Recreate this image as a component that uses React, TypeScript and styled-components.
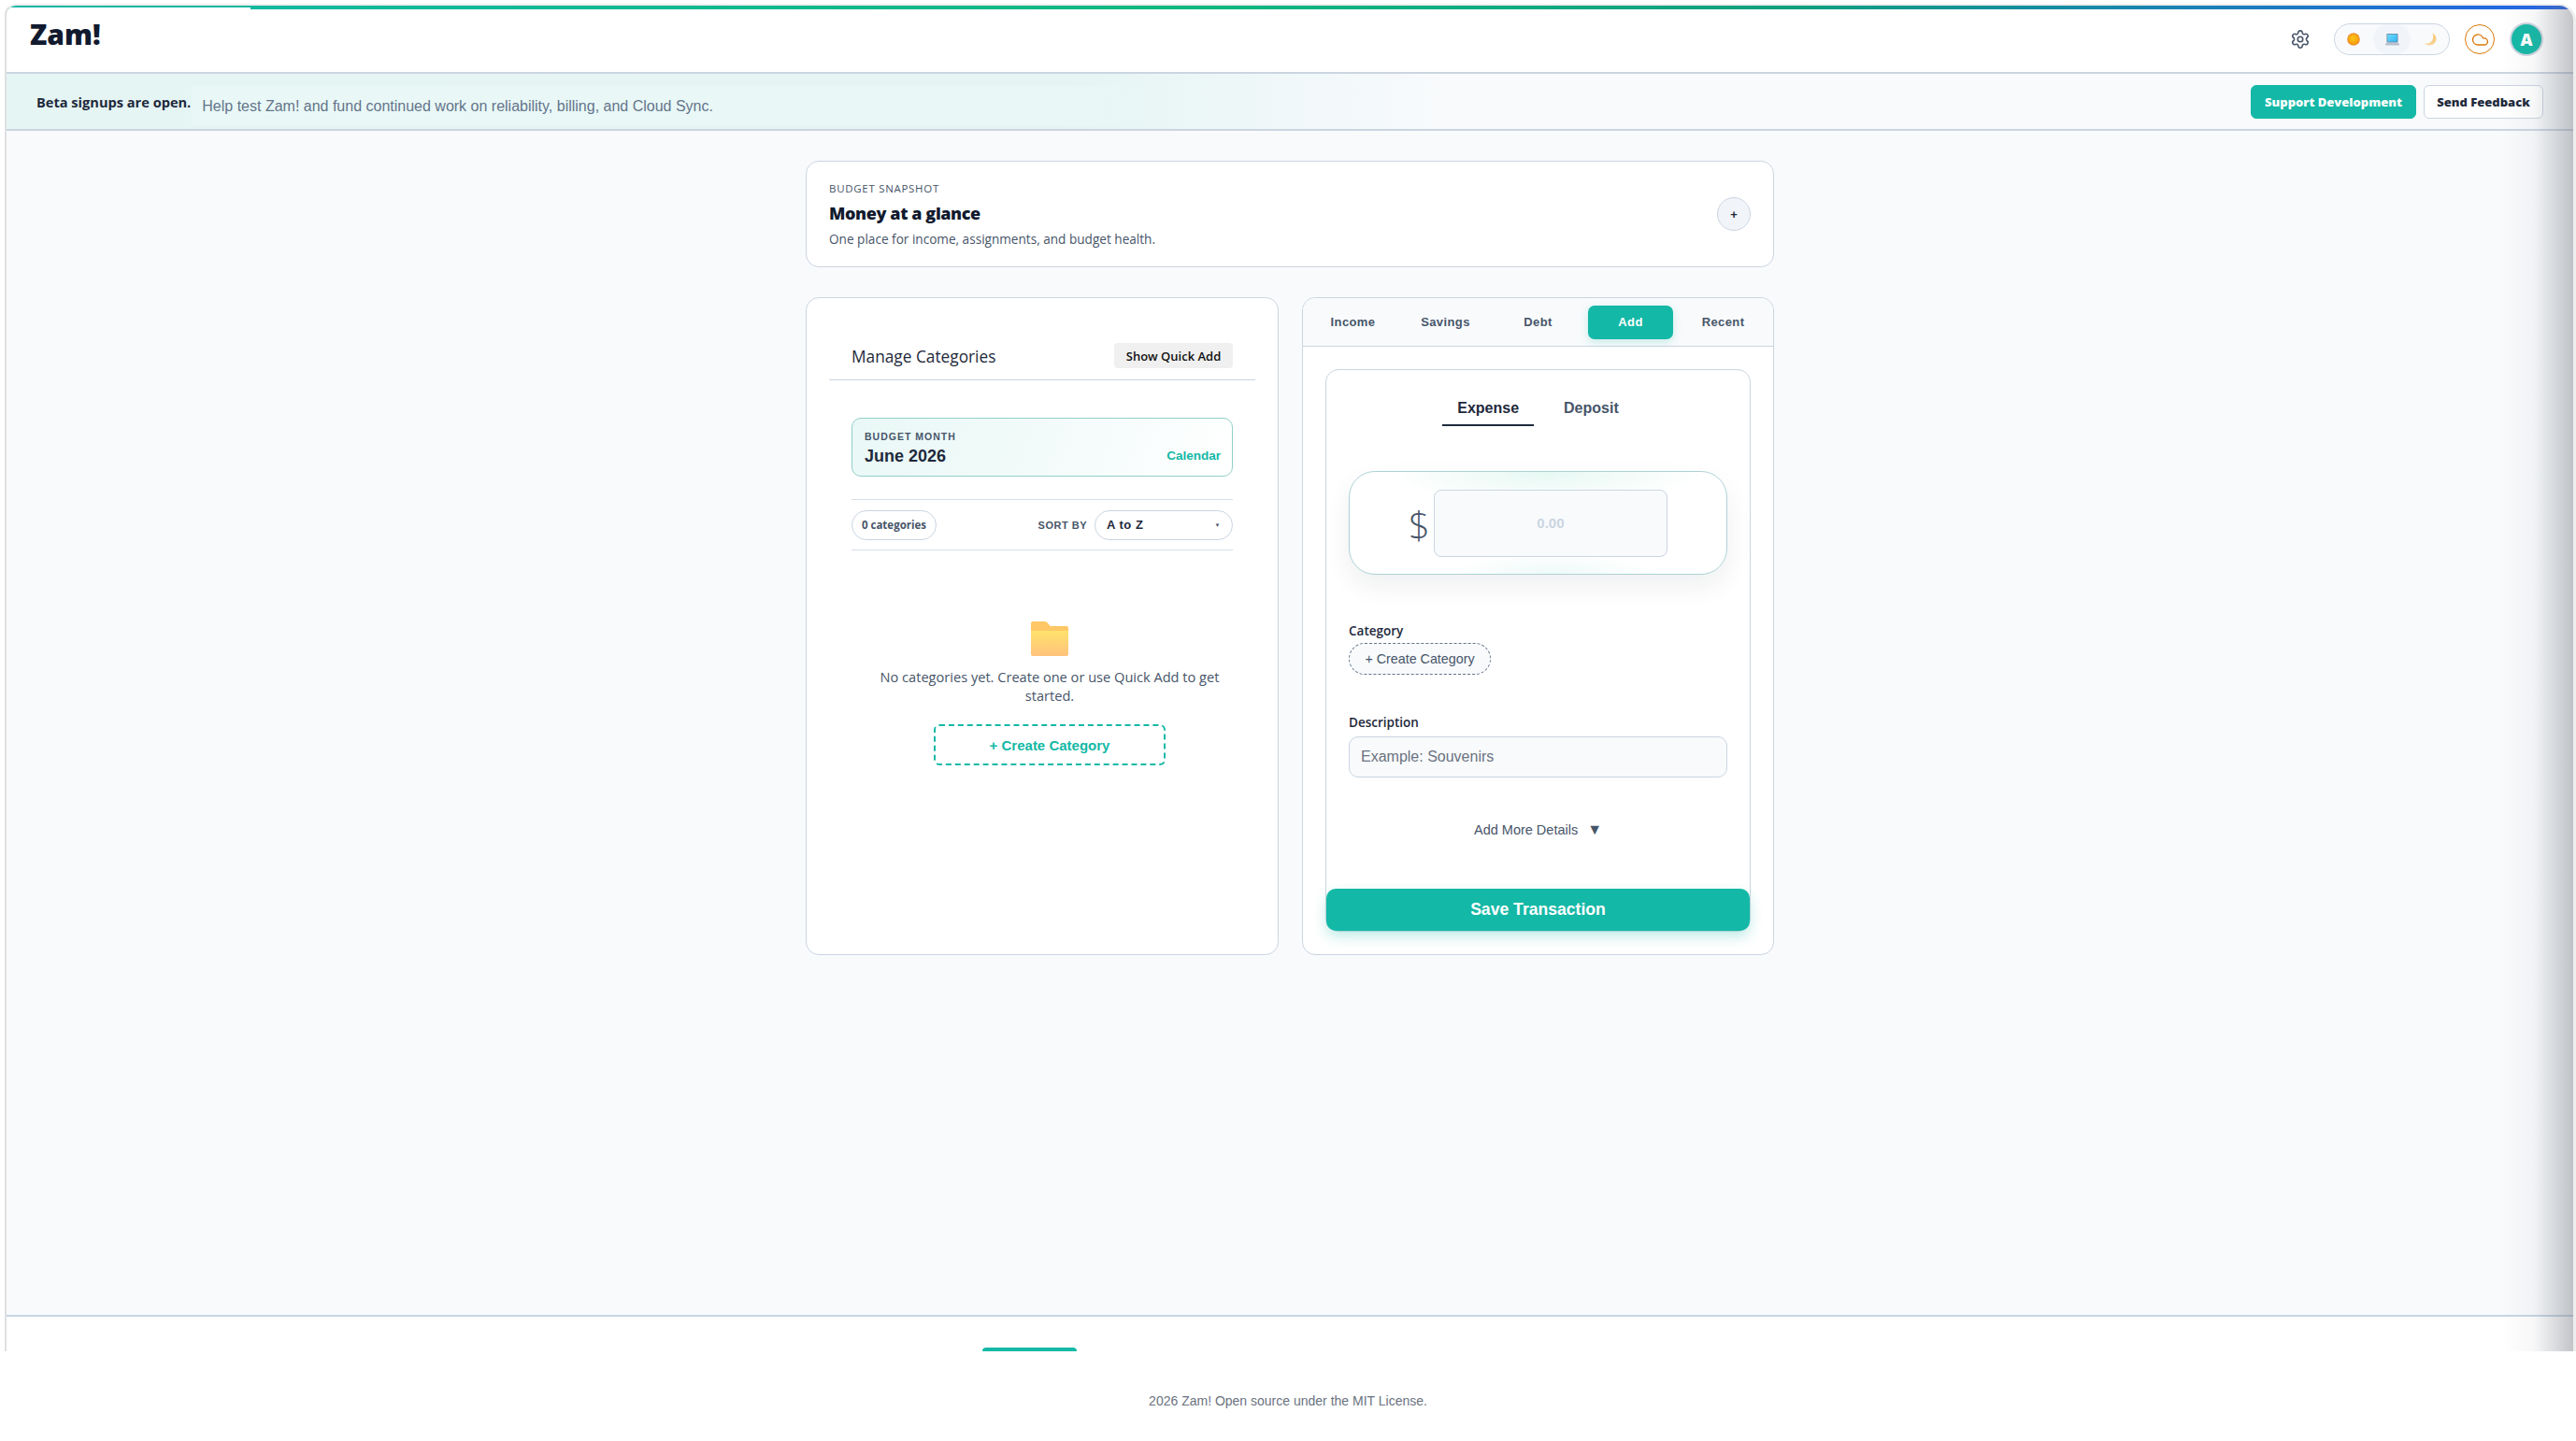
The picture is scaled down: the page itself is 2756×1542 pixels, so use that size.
import React from 'react';
import styled, { createGlobalStyle } from 'styled-components';
import { Cloud, Settings } from 'lucide-react';

const teal = '#14b8a6';
const ink = '#1e293b';
const slate = '#475569';
const line = '#cbd5e1';
const ui = '"Open Sans", "Noto Sans", sans-serif';
const arial = '"Liberation Sans", Arial, sans-serif';

const GlobalStyle = createGlobalStyle`
  html, body { margin: 0; padding: 0; background: #fff; }
  body { font-family: ${arial}; color: ${ink}; }
  * { box-sizing: border-box; }
  input { font-family: inherit; }
  input:focus { outline: none; }
`;

const Page = styled.div`
  width: 2756px;
  height: 1542px;
  padding-top: 4px;
  overflow: hidden;
  display: flex;
  flex-direction: column;
`;

const Shell = styled.div`
  position: relative;
  width: 2751px;
  height: 1442px;
  margin-left: 5px;
  padding-top: 2px;
  display: flex;
  flex-direction: column;
  background: #fff;
  border-top: 2px solid #eee;
  border-left: 2px solid #e0e0e0;
  border-right: 3px solid #eee;
  border-top-left-radius: 12px;
  border-top-right-radius: 18px;
  overflow: hidden;
`;

const RainbowBar = styled.div`
  position: absolute;
  top: 0;
  left: 0;
  right: 0;
  height: 4px;
  background: linear-gradient(90deg, #14b8a6 0%, #10b981 45%, #0f9f7f 70%, #2563eb 100%);
`;

const BarNotch = styled.div`
  position: absolute;
  top: 2px;
  left: 0;
  width: 261px;
  height: 2px;
  background: #fff;
`;

const EdgeShade = styled.div`
  position: absolute;
  top: 0;
  right: 0;
  bottom: 0;
  width: 76px;
  pointer-events: none;
  background: linear-gradient(90deg, rgba(120, 125, 135, 0) 0%, rgba(120, 125, 135, 0.06) 45%, rgba(110, 115, 125, 0.42) 100%);
`;

const Header = styled.header`
  height: 71px;
  flex-shrink: 0;
  display: flex;
  align-items: flex-start;
  justify-content: space-between;
  padding: 14px 34px 0 25px;
  border-bottom: 2px solid ${line};
`;

const Logo = styled.div`
  font-family: ${ui};
  font-weight: 800;
  font-size: 30px;
  line-height: 30px;
  color: #111a2e;
`;

const HeaderActions = styled.div`
  display: flex;
  align-items: center;
  height: 40px;
`;

const GearButton = styled.span`
  display: flex;
  color: ${slate};
  margin-right: 25px;
`;

const ThemeSwitch = styled.div`
  display: flex;
  align-items: center;
  width: 124px;
  height: 34px;
  border: 1px solid ${line};
  border-radius: 17px;
  background: #f8fafc;
  margin-right: 16px;
`;

const ThemeOption = styled.span<{ $active?: boolean }>`
  flex: 1;
  height: 32px;
  display: flex;
  align-items: center;
  justify-content: center;
  border-radius: 16px;
  background: ${({ $active }) => ($active ? '#f1f5f9' : 'transparent')};
`;

const SyncBadge = styled.span`
  width: 32px;
  height: 32px;
  border-radius: 50%;
  border: 1.5px solid #d97706;
  color: #d97706;
  display: flex;
  align-items: center;
  justify-content: center;
  margin-right: 18px;
`;

const Avatar = styled.span`
  width: 32px;
  height: 32px;
  border-radius: 50%;
  background: ${teal};
  color: #fff;
  font-family: ${ui};
  font-weight: 800;
  font-size: 18px;
  display: flex;
  align-items: center;
  justify-content: center;
  box-shadow: 0 0 0 2px #cfd6e0;
`;

const Banner = styled.div`
  height: 61px;
  flex-shrink: 0;
  display: flex;
  align-items: center;
  padding: 0 32px 0 32px;
  border-bottom: 2px solid ${line};
  background: linear-gradient(90deg, #e5f5f4 0%, #e6f5f4 42%, #f8fafc 56%);
`;

const BetaTitle = styled.strong`
  font-family: ${ui};
  font-size: 14.6px;
  font-weight: 700;
  color: ${ink};
  white-space: nowrap;
`;

const BetaText = styled.span`
  width: 1043px;
  height: 43px;
  margin: 9px 0 0 1px;
  padding: 2px 0 0 11px;
  display: flex;
  align-items: center;
  font-size: 16px;
  color: #64748b;
  background: linear-gradient(90deg, #e9f8f6 0%, #e9f8f6 90%, rgba(233, 248, 246, 0) 100%);
`;

const BannerButtons = styled.div`
  margin-left: auto;
  display: flex;
  gap: 8px;
`;

const BannerButton = styled.button<{ $primary?: boolean }>`
  height: 36px;
  padding: 0;
  width: ${({ $primary }) => ($primary ? '177px' : '128px')};
  border-radius: 6px;
  border: 1px solid ${({ $primary }) => ($primary ? teal : line)};
  background: ${({ $primary }) => ($primary ? teal : '#fff')};
  color: ${({ $primary }) => ($primary ? '#fff' : ink)};
  font-family: ${ui};
  font-weight: 800;
  font-size: 13px;
`;

const Main = styled.main`
  flex: 1;
  display: flex;
  justify-content: center;
  padding-top: 32px;
  background: #f8fafc;
  border-bottom: 2px solid #c5d5e3;
`;

const Column = styled.div`
  width: 1036px;
`;

const Card = styled.section`
  background: #fff;
  border: 1px solid ${line};
  border-radius: 14px;
`;

const SnapshotCard = styled(Card)`
  height: 114px;
  margin-bottom: 32px;
  padding: 0 24px;
  display: flex;
  align-items: center;
  justify-content: space-between;
`;

const Eyebrow = styled.div`
  font-family: ${ui};
  font-size: 11.5px;
  letter-spacing: 0.7px;
  line-height: 16px;
  color: ${slate};
`;

const SnapshotTitle = styled.h2`
  margin: 6px 0 7px;
  font-family: ${ui};
  font-size: 18px;
  line-height: 24px;
  font-weight: 800;
  letter-spacing: -0.4px;
  color: #111a2e;
`;

const SnapshotText = styled.p`
  margin: 0;
  font-family: ${ui};
  font-size: 13.6px;
  line-height: 18px;
  color: ${slate};
`;

const RoundButton = styled.button`
  width: 36px;
  height: 36px;
  padding: 0;
  border-radius: 50%;
  border: 1px solid ${line};
  background: #f1f5f9;
  font-size: 13px;
  font-weight: 700;
  color: ${ink};
`;

const Panels = styled.div`
  display: grid;
  grid-template-columns: 506px 505px;
  gap: 25px;
  height: 704px;
`;

const CategoriesCard = styled(Card)`
  padding-top: 48px;
`;

const CategoriesHead = styled.div`
  display: flex;
  align-items: center;
  justify-content: space-between;
  margin: 0 24px;
  padding: 0 24px 12px;
  border-bottom: 1px solid ${line};
`;

const CategoriesTitle = styled.h3`
  margin: 1px 0 0;
  font-family: ${ui};
  font-size: 17.3px;
  font-weight: 400;
  color: ${ink};
`;

const QuickAddButton = styled.button`
  width: 127px;
  height: 27px;
  padding: 0;
  border: 0;
  border-radius: 4px;
  background: #f0f0f0;
  font-family: ${ui};
  font-size: 13px;
  font-weight: 600;
  color: #111;
`;

const MonthBox = styled.div`
  height: 63px;
  margin: 40px 48px 0;
  padding: 0 12px 0 13px;
  display: flex;
  align-items: flex-end;
  justify-content: space-between;
  border: 1px solid #93cfc9;
  border-radius: 10px;
  background: linear-gradient(110deg, #e9f8f6 0%, #f0faf9 40%, #fff 100%);
`;

const MonthLabel = styled.div`
  font-size: 10.5px;
  font-weight: 700;
  letter-spacing: 1px;
  line-height: 14px;
  color: ${slate};
`;

const MonthName = styled.div`
  font-size: 18px;
  font-weight: 700;
  line-height: 22px;
  margin: 3px 0 10px;
  color: ${ink};
`;

const CalendarLink = styled.span`
  font-size: 13.5px;
  font-weight: 700;
  line-height: 22px;
  margin-bottom: 10px;
  color: ${teal};
`;

const SortRow = styled.div`
  height: 55px;
  margin: 24px 48px 0;
  display: flex;
  align-items: center;
  border-top: 1px solid #d8dfe9;
  border-bottom: 1px solid #d8dfe9;
`;

const CountPill = styled.span`
  width: 91px;
  height: 32px;
  display: flex;
  align-items: center;
  justify-content: center;
  border: 1px solid ${line};
  border-radius: 16px;
  font-family: ${ui};
  font-size: 11.5px;
  font-weight: 700;
  color: ${slate};
`;

const SortLabel = styled.span`
  margin-left: auto;
  font-size: 11px;
  font-weight: 700;
  letter-spacing: 0.5px;
  color: ${slate};
`;

const SortSelect = styled.div`
  width: 148px;
  height: 32px;
  margin-left: 8px;
  padding: 0 12px;
  display: flex;
  align-items: center;
  justify-content: space-between;
  border: 1px solid ${line};
  border-radius: 16px;
  font-size: 13px;
  font-weight: 700;
  letter-spacing: 0.5px;
  color: ${ink};
`;

const SortCaret = styled.span`
  font-size: 6px;
  color: ${slate};
`;

const EmptyState = styled.div`
  margin: 76px 48px 0;
  padding-left: 16px;
  display: flex;
  flex-direction: column;
  align-items: center;
`;

const EmptyText = styled.p`
  margin: 12px 0 21px;
  font-family: ${ui};
  font-size: 14.6px;
  line-height: 20px;
  text-align: center;
  color: ${slate};
`;

const CreateButton = styled.button`
  width: 248px;
  height: 44px;
  padding: 0;
  border: 2px dashed ${teal};
  border-radius: 6px;
  background: #fff;
  font-family: ${arial};
  font-size: 15px;
  font-weight: 700;
  color: ${teal};
`;

const EntryCard = styled(Card)`
  display: flex;
  flex-direction: column;
`;

const EntryTabs = styled.nav`
  height: 52px;
  padding: 8px 8px 7px;
  display: grid;
  grid-template-columns: repeat(5, 1fr);
  gap: 8px;
  flex-shrink: 0;
  background: #f8fafc;
  border-bottom: 1px solid ${line};
  border-radius: 14px 14px 0 0;
`;

const EntryTab = styled.button<{ $active?: boolean }>`
  padding: 0 0 2px;
  border: 0;
  border-radius: 7px;
  font-family: ${arial};
  font-size: 13px;
  font-weight: 700;
  letter-spacing: 0.4px;
  color: ${({ $active }) => ($active ? '#fff' : slate)};
  background: ${({ $active }) => ($active ? teal : 'transparent')};
  box-shadow: ${({ $active }) => ($active ? '0 3px 8px rgba(20, 184, 166, 0.22)' : 'none')};
`;

const EntryBody = styled.div`
  flex: 1;
  display: flex;
  padding: 24px;
`;

const FormCard = styled(Card)`
  flex: 1;
  display: flex;
  flex-direction: column;
  padding-top: 24px;
`;

const TypeTabs = styled.div`
  display: flex;
  justify-content: center;
  gap: 16px;
`;

const TypeTab = styled.button<{ $active?: boolean }>`
  height: 36px;
  padding: 0 16px;
  border: 0;
  border-bottom: 2px solid ${({ $active }) => ($active ? ink : 'transparent')};
  background: none;
  font-family: ${arial};
  font-size: 16px;
  font-weight: 700;
  color: ${({ $active }) => ($active ? ink : slate)};
`;

const AmountBox = styled.div`
  height: 111px;
  margin: 48px 24px 0;
  display: flex;
  align-items: center;
  justify-content: center;
  gap: 4px;
  border: 1px solid #aed2d6;
  border-radius: 28px;
  background:
    radial-gradient(ellipse 170px 34px at 52% 0%, #e6f8f3 0%, rgba(255, 255, 255, 0) 100%),
    radial-gradient(ellipse 110px 22px at 54% 100%, #eefaf8 0%, rgba(255, 255, 255, 0) 100%),
    #fff;
  box-shadow: 0 12px 28px rgba(15, 23, 42, 0.07);
`;

const DollarSign = styled.span`
  font-family: ${ui};
  font-weight: 300;
  font-size: 40px;
  line-height: 44px;
  margin-top: 4px;
  color: ${slate};
`;

const AmountInput = styled.input`
  width: 250px;
  height: 72px;
  border: 1px solid ${line};
  border-radius: 8px;
  background: #f8fafc;
  text-align: center;
  font-size: 15px;
  font-weight: 700;
  &::placeholder { color: ${line}; opacity: 1; }
`;

const FieldLabel = styled.label<{ $top: number; $bottom: number }>`
  display: block;
  margin: ${({ $top }) => $top}px 24px ${({ $bottom }) => $bottom}px;
  font-family: ${ui};
  font-size: 13.5px;
  line-height: 18px;
  font-weight: 600;
  color: ${ink};
`;

const CategoryPill = styled.button`
  align-self: flex-start;
  width: 152px;
  height: 34px;
  margin-left: 24px;
  padding: 0;
  border: 1px dashed #64748b;
  border-radius: 17px;
  background: #f8fafc;
  font-family: ${arial};
  font-size: 14.3px;
  color: ${slate};
`;

const TextInput = styled.input`
  height: 44px;
  margin: 0 24px;
  padding: 0 12px;
  border: 1px solid ${line};
  border-radius: 10px;
  background: #f8fafc;
  font-size: 16px;
  &::placeholder { color: #6b7280; opacity: 1; }
`;

const DetailsToggle = styled.div`
  margin-top: 46px;
  display: flex;
  justify-content: center;
  gap: 10px;
  font-size: 14.5px;
  line-height: 20px;
  color: ${slate};
`;

const DetailsArrow = styled.span`
  font-size: 16px;
`;

const SaveButton = styled.button`
  margin-top: auto;
  height: 45px;
  border: 0;
  border-radius: 10px;
  background: ${teal};
  color: #fff;
  font-family: ${arial};
  font-size: 17.6px;
  font-weight: 700;
  box-shadow: 0 6px 14px rgba(20, 184, 166, 0.28);
`;

const ShellFoot = styled.div`
  height: 37px;
  flex-shrink: 0;
  display: flex;
  align-items: flex-end;
  padding-left: 1044px;
`;

const FootTab = styled.span`
  width: 101px;
  height: 4px;
  border-radius: 4px 4px 0 0;
  background: ${teal};
`;

const PageFooter = styled.footer`
  flex: 1;
  padding-top: 44px;
  text-align: center;
  font-size: 14px;
  line-height: 18px;
  color: #6b7280;
`;

const Sun = () => (
  <svg width="14" height="14" viewBox="0 0 14 14">
    <defs>
      <radialGradient id="sunFill" cx="45%" cy="40%" r="60%">
        <stop offset="0%" stopColor="#fcc419" />
        <stop offset="100%" stopColor="#f59f0a" />
      </radialGradient>
    </defs>
    <circle cx="7" cy="7" r="6.8" fill="#f08c2e" />
    <circle cx="7" cy="7" r="5.6" fill="url(#sunFill)" />
  </svg>
);

const Laptop = () => (
  <svg width="15" height="15" viewBox="0 0 15 15">
    <defs>
      <linearGradient id="laptopScreen" x1="0" y1="0" x2="1" y2="1">
        <stop offset="0%" stopColor="#6fdcff" />
        <stop offset="100%" stopColor="#2fb4f0" />
      </linearGradient>
    </defs>
    <rect x="1.5" y="1" width="12" height="9.5" rx="0.8" fill="#6b7a90" />
    <rect x="2.2" y="1.7" width="10.6" height="8" fill="url(#laptopScreen)" />
    <path d="M0.5 11h14l0.5 2.4H0z" fill="#b7bfd0" />
  </svg>
);

const Moon = () => (
  <svg width="14" height="14" viewBox="0 0 14 14">
    <defs>
      <linearGradient id="moonFill" x1="1" y1="0" x2="0" y2="1">
        <stop offset="0%" stopColor="#f9c36a" />
        <stop offset="100%" stopColor="#f8dcae" />
      </linearGradient>
    </defs>
    <path d="M9.6 0.4C13.5 2.5 14.5 7 12.2 10.4 9.8 13.8 4 14.6 0.6 11.2 4.5 12.2 8 10.8 9.4 7.8 10.5 5.4 10.4 2.8 9.6 0.4z" fill="url(#moonFill)" />
  </svg>
);

const Folder = () => (
  <svg width="40" height="37" viewBox="0 0 40 37">
    <defs>
      <linearGradient id="folderFront" x1="0" y1="0" x2="0" y2="1">
        <stop offset="0%" stopColor="#ffe26c" />
        <stop offset="100%" stopColor="#ffc27d" />
      </linearGradient>
    </defs>
    <path d="M2 0h13c1 0 1.6.4 2.2 1l3.6 4H38a2 2 0 0 1 2 2v8H0V2a2 2 0 0 1 2-2z" fill="#ffc766" />
    <path d="M0 10h40v25a2 2 0 0 1-2 2H2a2 2 0 0 1-2-2z" fill="url(#folderFront)" />
  </svg>
);

const App: React.FC = () => (
  <>
    <GlobalStyle />
    <Page>
      <Shell>
        <RainbowBar />
        <BarNotch />
        <Header>
          <Logo>Zam!</Logo>
          <HeaderActions>
            <GearButton>
              <Settings size={22} strokeWidth={1.75} />
            </GearButton>
            <ThemeSwitch>
              <ThemeOption>
                <Sun />
              </ThemeOption>
              <ThemeOption $active>
                <Laptop />
              </ThemeOption>
              <ThemeOption>
                <Moon />
              </ThemeOption>
            </ThemeSwitch>
            <SyncBadge>
              <Cloud size={19} strokeWidth={1.75} />
            </SyncBadge>
            <Avatar>A</Avatar>
          </HeaderActions>
        </Header>
        <Banner>
          <BetaTitle>Beta signups are open.</BetaTitle>
          <BetaText>Help test Zam! and fund continued work on reliability, billing, and Cloud Sync.</BetaText>
          <BannerButtons>
            <BannerButton $primary>Support Development</BannerButton>
            <BannerButton>Send Feedback</BannerButton>
          </BannerButtons>
        </Banner>
        <Main>
          <Column>
            <SnapshotCard>
              <div>
                <Eyebrow>BUDGET SNAPSHOT</Eyebrow>
                <SnapshotTitle>Money at a glance</SnapshotTitle>
                <SnapshotText>One place for income, assignments, and budget health.</SnapshotText>
              </div>
              <RoundButton>+</RoundButton>
            </SnapshotCard>
            <Panels>
              <CategoriesCard>
                <CategoriesHead>
                  <CategoriesTitle>Manage Categories</CategoriesTitle>
                  <QuickAddButton>Show Quick Add</QuickAddButton>
                </CategoriesHead>
                <MonthBox>
                  <div>
                    <MonthLabel>BUDGET MONTH</MonthLabel>
                    <MonthName>June 2026</MonthName>
                  </div>
                  <CalendarLink>Calendar</CalendarLink>
                </MonthBox>
                <SortRow>
                  <CountPill>0 categories</CountPill>
                  <SortLabel>SORT BY</SortLabel>
                  <SortSelect>
                    A to Z
                    <SortCaret>▼</SortCaret>
                  </SortSelect>
                </SortRow>
                <EmptyState>
                  <Folder />
                  <EmptyText>No categories yet. Create one or use Quick Add to get started.</EmptyText>
                  <CreateButton>+ Create Category</CreateButton>
                </EmptyState>
              </CategoriesCard>
              <EntryCard>
                <EntryTabs>
                  <EntryTab>Income</EntryTab>
                  <EntryTab>Savings</EntryTab>
                  <EntryTab>Debt</EntryTab>
                  <EntryTab $active>Add</EntryTab>
                  <EntryTab>Recent</EntryTab>
                </EntryTabs>
                <EntryBody>
                  <FormCard>
                    <TypeTabs>
                      <TypeTab $active>Expense</TypeTab>
                      <TypeTab>Deposit</TypeTab>
                    </TypeTabs>
                    <AmountBox>
                      <DollarSign>$</DollarSign>
                      <AmountInput placeholder="0.00" readOnly />
                    </AmountBox>
                    <FieldLabel $top={51} $bottom={4}>Category</FieldLabel>
                    <CategoryPill>+ Create Category</CategoryPill>
                    <FieldLabel $top={42} $bottom={6}>Description</FieldLabel>
                    <TextInput placeholder="Example: Souvenirs" readOnly />
                    <DetailsToggle>
                      <span>Add More Details</span>
                      <DetailsArrow>▼</DetailsArrow>
                    </DetailsToggle>
                    <SaveButton>Save Transaction</SaveButton>
                  </FormCard>
                </EntryBody>
              </EntryCard>
            </Panels>
          </Column>
        </Main>
        <ShellFoot>
          <FootTab />
        </ShellFoot>
        <EdgeShade />
      </Shell>
      <PageFooter>2026 Zam! Open source under the MIT License.</PageFooter>
    </Page>
  </>
);

export default App;
